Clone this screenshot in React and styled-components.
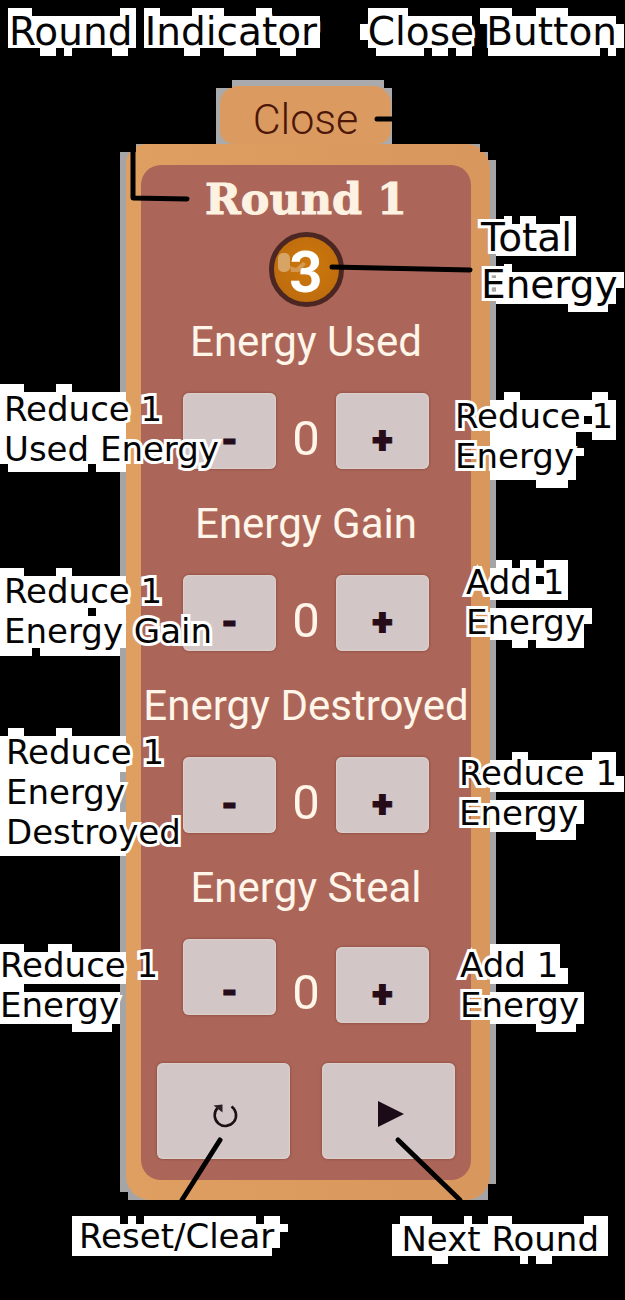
import React, { useState } from "react";
import styled, { createGlobalStyle } from "styled-components";

const GlobalStyle = createGlobalStyle`
  * { box-sizing: border-box; }
  body { margin: 0; background: #000; }
  button { font: inherit; border: 0; padding: 0; cursor: pointer; }
`;

const Page = styled.main`
  min-height: 100vh;
  background: #000;
  overflow: hidden;
`;

const Header = styled.header`
  display: flex;
  justify-content: space-between;
  padding: 8px 8px 25px 9px;
`;

const Footer = styled.footer`
  display: flex;
  justify-content: space-between;
  padding: 16px 26px 0 79px;
`;

const Columns = styled.div`
  display: grid;
  grid-template-columns: minmax(0, 120fr) 376px minmax(0, 129fr);
`;

const Stage = styled.section`
  grid-column: 2;
  position: relative;
`;

const NoteText = styled.div`
  position: relative;
  color: #050505;
  font-family: "DejaVu Sans", sans-serif;
  font-size: ${(p) => (p.$large ? 39 : 34)}px;
  line-height: ${(p) => (p.$large ? 47 : 40)}px;
  white-space: pre;
`;

const PinnedNote = styled.div`
  position: absolute;
  left: ${(p) => p.$x}px;
  top: ${(p) => p.$y}px;
`;

const LowerNote = styled.div`
  padding-top: 3px;
`;

const Outlined = styled.span`
  position: relative;
  -webkit-text-stroke: 6px #fff;
  paint-order: stroke fill;
  stroke-linejoin: round;
`;

const Backing = styled.svg`
  position: absolute;
  left: 0;
  top: 0;
  overflow: visible;
  fill: #fff;
`;

const TabBacking = styled.div`
  width: 176px;
  margin-left: 96px;
  padding: 6px 1px 0 4px;
  background: #aaa9ab;
  clip-path: polygon(16px 0, 168px 0, 168px 8px, 100% 8px, 100% 100%, 0 100%, 0 8px, 16px 8px);
`;

const CloseTab = styled.button`
  display: block;
  width: 100%;
  height: 58px;
  padding: 8px 0 !important;
  border-radius: 18px 18px 14px 14px;
  background: #db9b60;
  color: #4c1609;
  font-family: Roboto, sans-serif !important;
  font-size: 43px !important;
  font-weight: 300 !important;
  line-height: 50px !important;
`;

const FrameBacking = styled.div`
  padding: 0 6px;
  background: #a5a5a7;
  clip-path: polygon(
    16px 0, 360px 0, 360px 8px, 368px 8px, 368px 16px, 100% 16px,
    100% calc(100% - 16px), 368px calc(100% - 16px), 368px 100%,
    8px 100%, 8px calc(100% - 8px), 0 calc(100% - 8px), 0 8px, 16px 8px
  );
`;

const Frame = styled.div`
  padding: 21px 19px 20px 15px;
  border-radius: 20px 24px 24px 24px;
  background: linear-gradient(90deg, #df9f61, #d7975d);
`;

const Panel = styled.div`
  padding-bottom: 21px;
  border-radius: 20px;
  background: #ac6659;
  color: #fff5e8;
  font-family: Roboto, sans-serif;
`;

const Title = styled.h1`
  height: 67px;
  margin: 0;
  padding-top: 9px;
  font: bold 43px/50px "DejaVu Serif", serif;
  color: #fdf2e2;
  -webkit-text-stroke: 1px #fdf2e2;
  text-align: center;
`;

const Orb = styled.div`
  position: relative;
  display: flex;
  align-items: center;
  justify-content: center;
  width: 75px;
  height: 75px;
  margin: 0 auto;
  border: 5px solid #4b2622;
  border-radius: 50%;
  background: radial-gradient(circle at 55% 45%, #cd780c, #b8680f);
  color: #fff;
  font-size: 58px;
  font-weight: 700;
  line-height: 64px;
  padding-top: 4px;
`;

const Shine = styled.svg`
  position: absolute;
  left: 0;
  top: 0;
`;

const Heading = styled.h2`
  display: flex;
  justify-content: center;
  margin: 0;
  padding: ${(p) => (p.$first ? 10 : 30)}px 0 26px;
  font-size: 42px;
  font-weight: 400;
  line-height: 50px;
  white-space: nowrap;
`;

const Counter = styled.div`
  display: grid;
  grid-template-columns: 93px 1fr 93px;
  align-items: end;
  height: ${(p) => (p.$tall ? 84 : 76)}px;
  padding: 0 42px;
`;

const Key = styled.button`
  display: flex;
  align-items: center;
  justify-content: center;
  border-radius: 6px;
  background: #d2c7c6;
  box-shadow: inset 0 0 2px #f3e2d8, 0 0 3px #7d4038;
  color: #260b18;
`;

const StepKey = styled(Key)`
  align-self: ${(p) => (p.$raised ? "start" : "end")};
  height: 76px;
  padding-top: ${(p) => (p.$raised ? 28 : 18)}px !important;
  font-size: 38px !important;
  font-weight: 900 !important;
  -webkit-text-stroke: 1px #260b18;
`;

const Value = styled.output`
  height: 76px;
  padding-top: 8px;
  font-size: 49px;
  line-height: 76px;
  text-align: center;
`;

const Actions = styled.div`
  display: grid;
  grid-template-columns: 1fr 1fr;
  gap: 32px;
  padding: 40px 16px 0;
`;

const ActionKey = styled(Key)`
  height: 96px;
`;

const Connectors = styled.svg`
  position: absolute;
  left: 0;
  top: 0;
  overflow: visible;
  pointer-events: none;
  fill: none;
  stroke: #000;
  stroke-width: 5;
  stroke-linecap: round;
  stroke-linejoin: round;
`;

// Backing patches are [x, y, width, height] on the diagram's 8px grid;
// x and y of a note give the corner its patches are measured from.
const notes = {
  round: {
    x: 9, y: 8, large: true, text: "Round Indicator",
    patches: [[8, 16, 128, 32], [144, 16, 176, 32], [8, 8, 24, 8], [120, 8, 16, 8], [144, 8, 16, 8], [192, 8, 32, 8], [256, 8, 16, 8], [40, 48, 16, 8], [64, 48, 8, 8], [112, 48, 16, 8], [184, 48, 16, 8], [224, 48, 32, 8], [280, 48, 16, 8]],
  },
  close: {
    x: 368, y: 8, large: true, text: "Close Button",
    patches: [[368, 8, 40, 40], [360, 24, 8, 16], [408, 16, 64, 32], [480, 8, 32, 16], [488, 16, 128, 32], [536, 8, 32, 8], [616, 24, 8, 24], [376, 48, 48, 8], [432, 48, 16, 8], [456, 48, 16, 8], [488, 48, 112, 8], [608, 48, 8, 8]],
  },
  reset: {
    x: 79, y: 1216, text: "Reset/Clear",
    patches: [[72, 1216, 48, 8], [128, 1216, 8, 8], [144, 1216, 112, 8], [264, 1216, 16, 8], [72, 1224, 208, 24], [280, 1224, 8, 8], [72, 1248, 200, 8]],
  },
  next: {
    x: 401, y: 1219, text: "Next Round",
    patches: [[400, 1216, 32, 8], [464, 1216, 8, 8], [488, 1216, 24, 8], [584, 1216, 24, 8], [392, 1224, 216, 32], [432, 1256, 16, 8], [520, 1256, 8, 8], [536, 1256, 16, 8]],
  },
};

const pinned = [
  { x: 481, y: 214, large: true, text: "Total\nEnergy", patches: [[504, 216, 8, 8], [520, 216, 16, 8], [560, 216, 16, 8], [496, 224, 80, 32], [504, 264, 8, 8], [496, 272, 120, 32], [616, 272, 8, 16], [568, 304, 40, 8]] },
  { x: 4, y: 389, text: "Reduce 1\nUsed Energy", patches: [[0, 384, 24, 8], [56, 384, 16, 8], [0, 392, 126, 72], [8, 464, 80, 8], [96, 464, 30, 8]] },
  { x: 4, y: 571, text: "Reduce 1\nEnergy Gain", patches: [[0, 568, 24, 8], [56, 568, 16, 8], [0, 576, 126, 32], [0, 608, 88, 8], [96, 608, 30, 8], [0, 616, 126, 32], [0, 648, 32, 8], [40, 648, 80, 8]] },
  { x: 6, y: 732, text: "Reduce 1\nEnergy\nDestroyed", patches: [[8, 728, 16, 8], [56, 728, 16, 8], [0, 736, 126, 36], [0, 772, 120, 40], [0, 812, 126, 44]] },
  { x: 0, y: 945, text: "Reduce 1\nEnergy", patches: [[0, 944, 24, 8], [48, 944, 24, 8], [0, 952, 126, 32], [0, 984, 24, 8], [0, 992, 120, 32], [72, 1024, 40, 8]] },
  { x: 455, y: 396, text: "Reduce 1\nEnergy", patches: [[504, 392, 16, 8], [592, 392, 16, 8], [490, 400, 94, 32], [584, 400, 8, 16], [592, 400, 24, 40], [584, 424, 8, 8], [490, 432, 86, 48], [576, 448, 8, 8], [536, 480, 32, 8]] },
  { x: 466, y: 562, text: "Add 1\nEnergy", patches: [[496, 560, 16, 8], [520, 560, 16, 8], [544, 560, 24, 8], [490, 568, 46, 32], [536, 568, 8, 8], [536, 584, 8, 16], [544, 568, 24, 32], [490, 608, 102, 16], [490, 624, 94, 16], [512, 640, 16, 8], [536, 640, 48, 8]] },
  { x: 459, y: 753, text: "Reduce 1\nEnergy", patches: [[512, 752, 16, 8], [592, 752, 24, 8], [490, 760, 126, 32], [616, 776, 8, 16], [490, 800, 94, 24], [490, 824, 86, 8], [536, 832, 40, 8]] },
  { x: 460, y: 945, text: "Add 1\nEnergy", patches: [[490, 944, 70, 40], [560, 968, 8, 16], [490, 992, 94, 32], [536, 1024, 40, 8]] },
];

function Note({ x, y, large, text, patches }) {
  return (
    <NoteText $large={large}>
      <Backing width="8" height="8" viewBox={`${x} ${y} 8 8`} aria-hidden="true">
        {patches.map(([px, py, w, h]) => (
          <rect key={`${px}-${py}`} x={px} y={py} width={w} height={h} />
        ))}
      </Backing>
      <Outlined>{text}</Outlined>
    </NoteText>
  );
}

const counters = ["Energy Used", "Energy Gain", "Energy Destroyed", "Energy Steal"];
const cleared = [0, 0, 0, 0];

export default function App() {
  const [round, setRound] = useState(1);
  const [values, setValues] = useState(cleared);
  const step = (index, by) =>
    setValues((all) => all.map((v, i) => (i === index ? Math.max(0, v + by) : v)));

  return (
    <Page>
      <GlobalStyle />
      <Header>
        <Note {...notes.round} />
        <Note {...notes.close} />
      </Header>
      <Columns>
        <Stage>
          <TabBacking>
            <CloseTab type="button">Close</CloseTab>
          </TabBacking>
          <FrameBacking>
            <Frame>
              <Panel>
                <Title>Round {round}</Title>
                <Orb>
                  3
                  <Shine width="65" height="65" viewBox="0 0 65 65" aria-hidden="true">
                    <rect x="4" y="16" width="12" height="19" rx="5" fill="#d6a565" />
                    <path d="M16 29l6 2 7-6 3 2-7 8-8 0z" fill="#d9a66c" opacity=".7" />
                  </Shine>
                </Orb>
                {counters.map((name, i) => {
                  const last = i === counters.length - 1;
                  return (
                    <React.Fragment key={name}>
                      <Heading $first={i === 0}>{name}</Heading>
                      <Counter $tall={last}>
                        <StepKey type="button" $raised={last} onClick={() => step(i, -1)}>-</StepKey>
                        <Value>{values[i]}</Value>
                        <StepKey type="button" onClick={() => step(i, 1)}>+</StepKey>
                      </Counter>
                    </React.Fragment>
                  );
                })}
                <Actions>
                  <ActionKey type="button" aria-label="Reset/Clear" onClick={() => setValues(cleared)}>
                    <svg width="36" height="36" viewBox="0 0 36 36">
                      <path d="M25.500 13.500A10.700 10.700 0 1 1 11.500 15" fill="none" stroke="#1d1015" strokeWidth="2.600" />
                      <path d="M7.500 12.500L16.500 11.500V19.500Z" fill="#2b2027" />
                    </svg>
                  </ActionKey>
                  <ActionKey type="button" aria-label="Next Round" onClick={() => setRound(round + 1)}>
                    <svg width="32" height="32" viewBox="0 0 32 32">
                      <path d="M5 6l26 13L5 32z" fill="#1b0a18" />
                    </svg>
                  </ActionKey>
                </Actions>
              </Panel>
            </Frame>
          </FrameBacking>
          {pinned.map((n) => (
            <PinnedNote key={`${n.x}-${n.y}`} $x={n.x - 120} $y={n.y - 80}>
              <Note {...n} />
            </PinnedNote>
          ))}
          <Connectors width="376" height="1120" viewBox="120 80 376 1120" aria-hidden="true">
            <path d="M133 152V198L187 199" />
            <path d="M377 119H392" />
            <path d="M332 267L470 270" />
            <path d="M220 1140L182 1200" />
            <path d="M398 1140L460 1200" />
          </Connectors>
        </Stage>
      </Columns>
      <Footer>
        <Note {...notes.reset} />
        <LowerNote>
          <Note {...notes.next} />
        </LowerNote>
      </Footer>
    </Page>
  );
}
